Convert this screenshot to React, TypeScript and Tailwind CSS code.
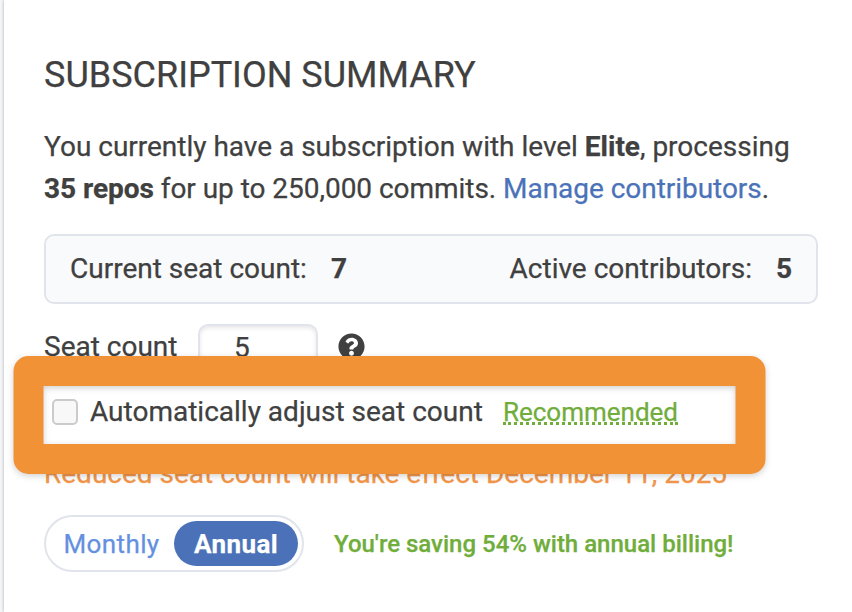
import { useState } from "react";
import { FaQuestionCircle } from "react-icons/fa";

const periods = ["Monthly", "Annual"];

function SeatStat({ label, value }: { label: string; value: number }) {
  return (
    <div className="flex items-center gap-[24px]">
      <span>{label}</span>
      <span className="font-bold">{value}</span>
    </div>
  );
}

export default function App() {
  const [period, setPeriod] = useState("Annual");
  const [seats, setSeats] = useState("5");

  return (
    <div className="flex h-[612px] w-[852px] overflow-hidden bg-[#f4f5f7] font-['Roboto',sans-serif] text-[28px] leading-[42px] text-[#404040] [-webkit-text-stroke:0.25px]">
      <main className="relative ml-[4px] flex-1 bg-white pl-[40px] pr-[34px] pt-[54px] shadow-[0_0_3px_rgba(0,0,0,0.3)]">
        <h1 className="text-[36px] leading-[42px]">SUBSCRIPTION SUMMARY</h1>

        <p className="mt-[30px] whitespace-nowrap tracking-[-0.01px]">
          You currently have a subscription with level <b className="font-bold">Elite</b>, processing
          <br />
          <span className="tracking-[-0.04px]">
            <b className="font-bold">35 repos</b> for up to 250,000 commits.{" "}
            <a href="#" className="text-[#4b72b8]">Manage contributors</a>.
          </span>
        </p>

        <div className="mt-[24px] flex h-[70px] items-center justify-between rounded-[10px] border-2 border-[#e1e4eb] bg-[#f9fafc] px-[24px]">
          <SeatStat label="Current seat count:" value={7} />
          <SeatStat label="Active contributors:" value={5} />
        </div>

        <div className="mt-[20px] flex h-[46px] items-center">
          <span className="w-[154px]">Seat count</span>
          <input
            value={seats}
            onChange={(e) => setSeats(e.target.value)}
            className="h-[46px] w-[120px] rounded-[10px] border-2 border-[#e1e4eb] pl-[34px] shadow-[inset_0_2px_4px_rgba(0,0,0,0.1)] outline-none"
          />
          <FaQuestionCircle className="mb-[1px] ml-[20px] size-[27px]" />
        </div>

        <div className="mt-[21px] flex h-[42px] items-center whitespace-nowrap">
          <input
            type="checkbox"
            className="ml-[8px] size-[26px] appearance-none rounded-[5px] border-2 border-[#cbcbcb] bg-[#f8f8f8]"
          />
          <span className="ml-[12px]">Automatically adjust seat count</span>
          <span className="ml-[20px] h-[26px] border-b-[3px] border-dotted border-[#70ad3b] text-[26px] leading-[27px] text-[#70ad3b]">
            Recommended
          </span>
        </div>

        <p className="mt-[20px] whitespace-nowrap text-[#f1964a]">
          Reduced seat count will take effect December 11, 2025
        </p>

        <div className="mt-[20px] flex items-center">
          <div className="flex h-[57px] w-[260px] items-center rounded-full border-2 border-[#e1e4eb] pl-[4px] pr-[4px]">
            {periods.map((name) => (
              <button
                key={name}
                onClick={() => setPeriod(name)}
                className={
                  period === name
                    ? "h-[45px] w-[124px] rounded-full bg-[#4b72b8] text-[26px] font-bold tracking-[0.4px] text-white"
                    : "h-[45px] w-[124px] rounded-full pr-[1px] text-[26px] tracking-[0.4px] text-[#6490df]"
                }
              >
                {name}
              </button>
            ))}
          </div>
          <span className="ml-[30px] whitespace-nowrap text-[24px] font-medium text-[#70ad3b]">
            You're saving 54% with annual billing!
          </span>
        </div>

        {/* Callout frame over the auto-adjust row */}
        <div className="pointer-events-none absolute left-[10px] top-[356px] h-[117.5px] w-[752px] -translate-x-[0.5px] rounded-[15px] border-[30px] border-[#f19236] drop-shadow-[0_2px_3px_rgba(0,0,0,0.18)]" />
      </main>
    </div>
  );
}
